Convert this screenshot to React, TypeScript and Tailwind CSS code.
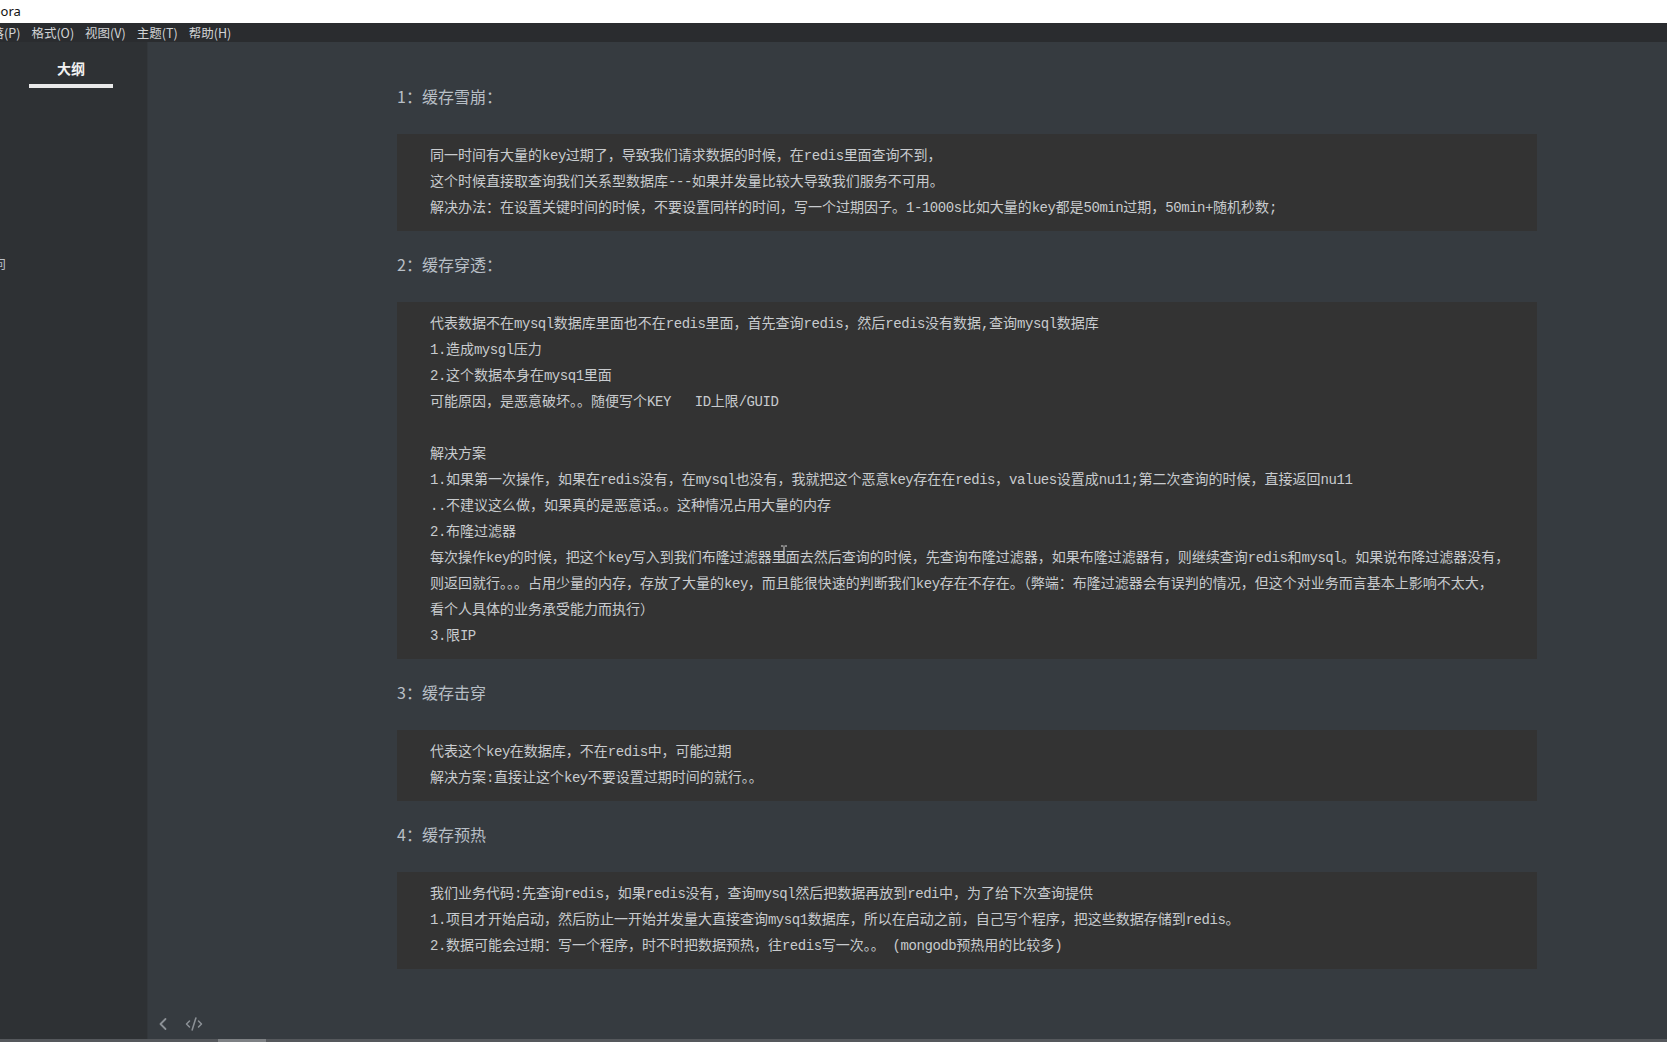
import * as React from "react";
import { ChevronLeft, CodeXml } from "lucide-react";

const sections = [
  {
    title: "1：缓存雪崩：",
    lines: [
      "同一时间有大量的key过期了，导致我们请求数据的时候，在redis里面查询不到，",
      "这个时候直接取查询我们关系型数据库---如果并发量比较大导致我们服务不可用。",
      "解决办法：在设置关键时间的时候，不要设置同样的时间，写一个过期因子。1-1000s比如大量的key都是50min过期，50min+随机秒数;",
    ],
  },
  {
    title: "2：缓存穿透：",
    lines: [
      "代表数据不在mysql数据库里面也不在redis里面，首先查询redis，然后redis没有数据,查询mysql数据库",
      "1.造成mysgl压力",
      "2.这个数据本身在mysq1里面",
      "可能原因，是恶意破坏。。随便写个KEY   ID上限/GUID",
      "",
      "解决方案",
      "1.如果第一次操作，如果在redis没有，在mysql也没有，我就把这个恶意key存在在redis，values设置成nu11;第二次查询的时候，直接返回nu11",
      "..不建议这么做，如果真的是恶意话。。这种情况占用大量的内存",
      "2.布隆过滤器",
      "每次操作key的时候，把这个key写入到我们布隆过滤器里面去然后查询的时候，先查询布隆过滤器，如果布隆过滤器有，则继续查询redis和mysql。如果说布降过滤器没有，",
      "则返回就行。。。占用少量的内存，存放了大量的key，而且能很快速的判断我们key存在不存在。（弊端：布隆过滤器会有误判的情况，但这个对业务而言基本上影响不太大，",
      "看个人具体的业务承受能力而执行）",
      "3.限IP",
    ],
  },
  {
    title: "3：缓存击穿",
    lines: [
      "代表这个key在数据库，不在redis中，可能过期",
      "解决方案:直接让这个key不要设置过期时间的就行。。",
    ],
  },
  {
    title: "4：缓存预热",
    lines: [
      "我们业务代码:先查询redis，如果redis没有，查询mysql然后把数据再放到redi中，为了给下次查询提供",
      "1.项目才开始启动，然后防止一开始并发量大直接查询mysq1数据库，所以在启动之前，自己写个程序，把这些数据存储到redis。",
      "2.数据可能会过期：写一个程序，时不时把数据预热，往redis写一次。。 (mongodb预热用的比较多)",
    ],
  },
];

const menu = ["段落(P)", "格式(O)", "视图(V)", "主题(T)", "帮助(H)"];

// latin runs in the code font are a touch narrower than Liberation Mono
function CodeLine({ text }: { text: string }) {
  const parts = text.split(/([\x20-\x7e]+)/);
  return (
    <div className="h-[26px] whitespace-pre">
      {parts.map((p, i) =>
        /^[\x20-\x7e]+$/.test(p) ? (
          <span key={i} className="tracking-[-0.45px]">
            {p}
          </span>
        ) : (
          <React.Fragment key={i}>{p}</React.Fragment>
        )
      )}
    </div>
  );
}

export default function App() {
  return (
    <div className="h-[1042px] w-[1667px] overflow-hidden flex flex-col bg-[#363b40] font-['Noto_Sans_CJK_SC',sans-serif]">
      {/* Title bar */}
      <div className="h-[23px] shrink-0 bg-white flex items-center overflow-hidden">
        <span className="-ml-[21px] text-[13px] text-[#111] font-['Noto_Sans','Noto_Sans_CJK_SC',sans-serif]">Typora</span>
      </div>

      {/* Menu bar */}
      <div className="h-[19px] shrink-0 bg-[#2a2c2f] flex items-center gap-[11px] overflow-hidden">
        {menu.map((m, i) => (
          <span
            key={m}
            className={`text-[12.5px] leading-[19px] text-[#d2d4d6] whitespace-nowrap ${i === 0 ? "-ml-[21px]" : ""}`}
          >
            {m}
          </span>
        ))}
      </div>

      {/* Body */}
      <div className="flex-1 flex min-h-0">
        {/* Sidebar */}
        <aside className="w-[148px] shrink-0 bg-[#2e3134] border-r border-[#33373b] flex flex-col overflow-hidden">
          <div className="mt-[16px] ml-[29px] w-[84px] flex flex-col items-center">
            <span className="text-[14px] leading-[20px] font-bold text-[#f2f2f2]">大纲</span>
            <div className="mt-[6px] h-[4px] w-[84px] bg-[#e9e9e9]" />
          </div>
          <div className="mt-[165px] text-[13px] leading-[20px] text-[#b8bfc6] -ml-[7px]">向</div>
        </aside>

        {/* Main */}
        <main className="relative flex-1 flex flex-col min-w-0">
          <div className="flex-1 pt-[41px] ml-[249px] w-[1140px]">
            {sections.map((s) => (
              <section key={s.title}>
                <h2 className="h-[26px] leading-[26px] text-[16px] font-normal text-[#b8bfc6] mb-[25px] whitespace-nowrap">
                  {s.title}
                </h2>
                <div className="bg-[#333333] pt-[9px] pb-[10px] pl-[33px] mb-[20px] font-['Liberation_Mono','Noto_Sans_CJK_SC',monospace] text-[14px] leading-[26px] text-[#c8cbce]">
                  {s.lines.map((l, i) => (
                    <CodeLine key={i} text={l} />
                  ))}
                </div>
              </section>
            ))}
          </div>

          {/* Footer */}
          <div className="h-[30px] shrink-0 flex items-center pl-[5px] gap-[12px] text-[#8c9196]">
            <ChevronLeft size={20} strokeWidth={2.2} />
            <CodeXml size={18} strokeWidth={2} />
          </div>

          {/* Mouse I-beam cursor */}
          <svg
            className="absolute left-[632px] top-[503px]"
            width="8"
            height="18"
            viewBox="0 0 8 18"
            fill="none"
          >
            <path d="M1 1h2.5M4.5 1H7M4 1.5v15M1 17h2.5M4.5 17H7" stroke="#d8d8d8" strokeWidth="1" />
          </svg>
        </main>
      </div>

      {/* Bottom scroll strip */}
      <div className="h-[3px] shrink-0 bg-[#55585c] flex">
        <div className="ml-[218px] w-[48px] bg-[#7e8184]" />
      </div>
    </div>
  );
}
